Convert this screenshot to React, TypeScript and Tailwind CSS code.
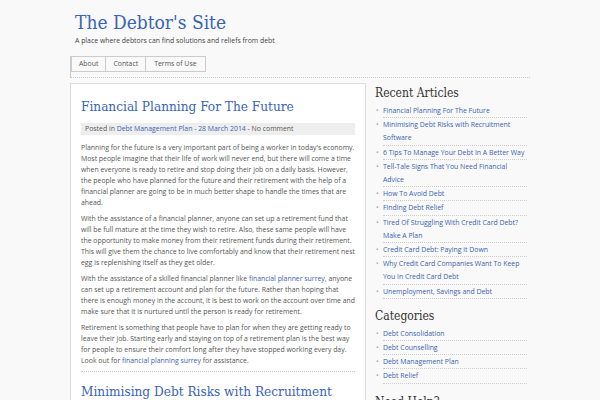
import React from "react";

const recent = [
  "Financial Planning For The Future",
  "Minimising Debt Risks with Recruitment Software",
  "6 Tips To Manage Your Debt In A Better Way",
  "Tell-Tale Signs That You Need Financial Advice",
  "How To Avoid Debt",
  "Finding Debt Relief",
  "Tired Of Struggling With Credit Card Debt? Make A Plan",
  "Credit Card Debt: Paying it Down",
  "Why Credit Card Companies Want To Keep You In Credit Card Debt",
  "Unemployment, Savings and Debt",
];

const categories = ["Debt Consolidation", "Debt Counselling", "Debt Management Plan", "Debt Relief"];

const serif = "font-['DejaVu_Serif_Condensed','DejaVu_Serif',serif] [font-stretch:condensed]";

function SideList({ items }: { items: string[] }) {
  return (
    <ul className="mt-[2px]">
      {items.map((item) => (
        <li key={item} className="flex leading-[13.2px]">
          <span className="w-[8px] shrink-0 pl-[1px] text-[#aaa]">•</span>
          <a className="flex-1 text-[#3a63b0] border-b border-dotted border-[#ccc]">{item}</a>
        </li>
      ))}
    </ul>
  );
}

export default function App() {
  return (
    <div className="min-h-screen bg-[#f9f9f9] font-['Open_Sans',sans-serif] text-[6.9px] text-[#555]">
      <div className="w-[460px] mx-auto">
        <header className="pt-[9px] pl-[5px]">
          <h1 className={`${serif} text-[19px] leading-[26px] text-[#3a63b5]`}>The Debtor's Site</h1>
          <p className="leading-[11px] text-[#444]">A place where debtors can find solutions and reliefs from debt</p>
        </header>

        <nav className="mt-[10px] border-l border-b border-dotted [border-left-style:solid] border-[#ccc] h-[22px]">
          <ul className="flex h-[16px] border border-solid border-[#ccc] w-max">
            <li className="px-[7px] leading-[14px] border-r border-[#ccc]">About</li>
            <li className="px-[7px] leading-[14px] border-r border-[#ccc]">Contact</li>
            <li className="px-[8px] leading-[14px]">Terms of Use</li>
          </ul>
        </nav>

        <div className="flex gap-[9px] mt-[5px]">
          <main className="w-[296px] bg-white border border-[#ddd] px-[10px] pt-[12px] pb-[20px]">
            <h2 className={`${serif} text-[13.5px] leading-[20px] text-[#3a63b5]`}>Financial Planning For The Future</h2>
            <div className="mt-[7px] bg-[#eee] px-[4px] leading-[12px]">
              Posted in <a className="text-[#3a63b0]">Debt Management Plan</a> -{" "}
              <a className="text-[#3a63b0]">28 March 2014</a> - No comment
            </div>
            <div className="mt-[7px] leading-[11px] space-y-[5px]">
              <p>
                Planning for the future is a very important part of being a worker in today's economy. Most people
                imagine that their life of work will never end, but there will come a time when everyone is ready to
                retire and stop doing their job on a daily basis. However, the people who have planned for the future
                and their retirement with the help of a financial planner are going to be in much better shape to handle
                the times that are ahead.
              </p>
              <p>
                With the assistance of a financial planner, anyone can set up a retirement fund that will be full mature
                at the time they wish to retire. Also, these same people will have the opportunity to make money from
                their retirement funds during their retirement. This will give them the chance to live comfortably and
                know that their retirement nest egg is replenishing itself as they get older.
              </p>
              <p>
                With the assistance of a skilled financial planner like{" "}
                <a className="text-[#3a63b0]">financial planner surrey</a>, anyone can set up a retirement account and
                plan for the future. Rather than hoping that there is enough money in the account, it is best to work on
                the account over time and make sure that it is nurtured until the person is ready for retirement.
              </p>
              <p>
                Retirement is something that people have to plan for when they are getting ready to leave their job.
                Starting early and staying on top of a retirement plan is the best way for people to ensure their comfort
                long after they have stopped working every day. Look out for{" "}
                <a className="text-[#3a63b0]">financial planning surrey</a> for assistance.
              </p>
            </div>
            <div className="mt-[5px] border-b border-dotted border-[#ccc]" />
            <h2 className={`${serif} mt-[9px] text-[13.5px] leading-[20px] text-[#3a63b5]`}>
              Minimising Debt Risks with Recruitment Software
            </h2>
          </main>

          <aside className="w-[155px] pr-[3px]">
            <h3 className={`${serif} text-[12px] leading-[18px] text-[#333] mt-[1px]`}>Recent Articles</h3>
            <SideList items={recent} />
            <h3 className={`${serif} text-[12px] leading-[18px] text-[#333] mt-[8px]`}>Categories</h3>
            <SideList items={categories} />
            <h3 className={`${serif} text-[12px] leading-[18px] text-[#333] mt-[9px]`}>Need Help?</h3>
          </aside>
        </div>
      </div>
    </div>
  );
}
